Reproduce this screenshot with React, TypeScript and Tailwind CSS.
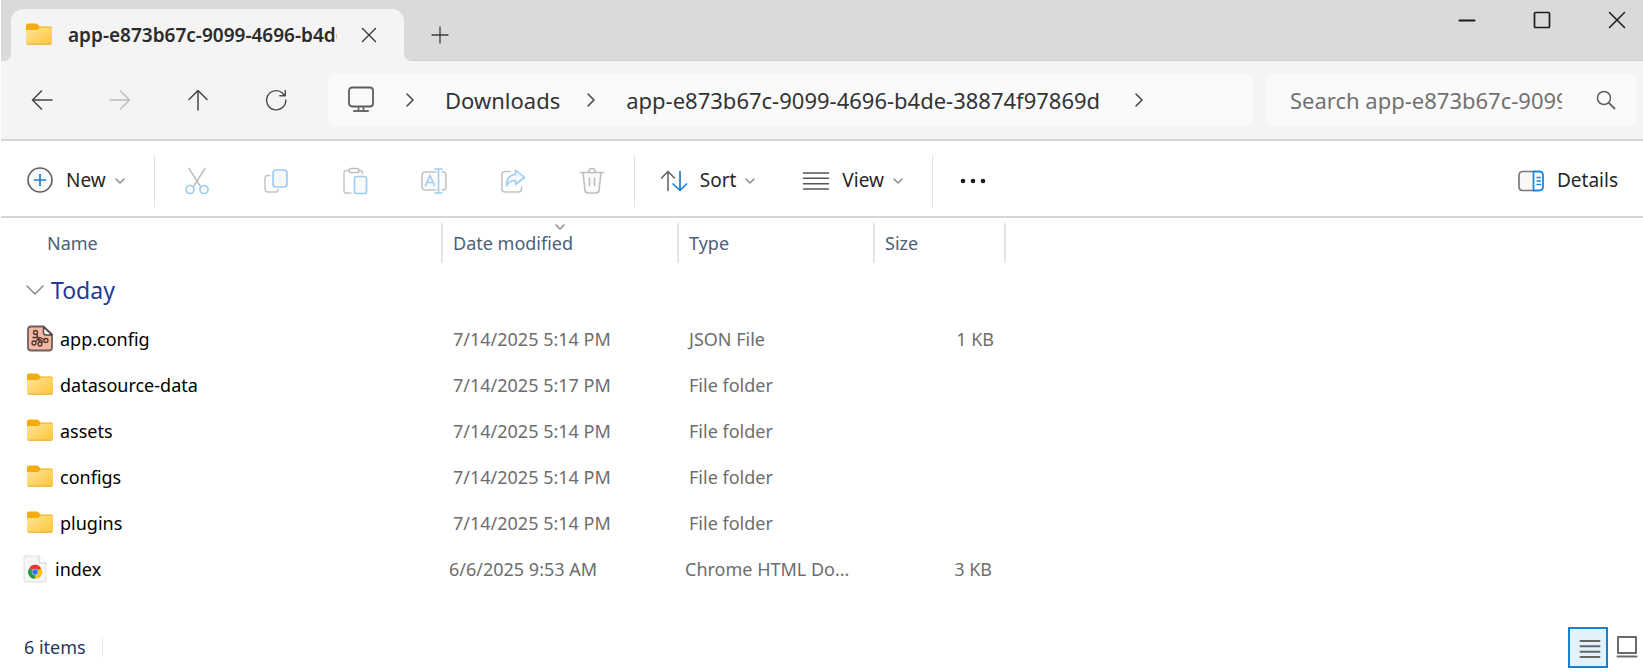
import type { ReactNode } from "react";

type IconProps = { className?: string };

function Svg({ w, h, className = "", children }: IconProps & { w: number; h: number; children: ReactNode }) {
  return (
    <svg
      width={w}
      height={h}
      viewBox={`0 0 ${w} ${h}`}
      fill="none"
      strokeLinecap="round"
      strokeLinejoin="round"
      aria-hidden="true"
      className={`shrink-0 ${className}`}
    >
      {children}
    </svg>
  );
}

function FolderIcon() {
  return (
    <Svg w={28} h={26}>
      <defs>
        <linearGradient id="folder-front" x1="0" y1="0" x2="1" y2="1">
          <stop offset="0" stopColor="#ffe49a" />
          <stop offset="1" stopColor="#fdc63a" />
        </linearGradient>
      </defs>
      <path d="M1 3.500Q1 1.500 3 1.500H10.500Q12 1.500 13 2.800L14.500 4.500H25Q27 4.500 27 6.500V12H1Z" fill="#f3ac0d" />
      <path d="M1 9Q1 8 2 8H11Q12.500 8 13.500 6.800Q14.500 5.500 16 5.500H25.500Q27 5.500 27 7V20.500Q27 22.500 25 22.500H3Q1 22.500 1 20.500Z" fill="url(#folder-front)" />
      <path d="M2 22.200H26" stroke="#e5a82c" strokeWidth="1" />
    </Svg>
  );
}

function JsonIcon() {
  return (
    <Svg w={28} h={28}>
      <path d="M5 1.500H17.500L26 9.500V22.500Q26 25.500 23 25.500H5Q2 25.500 2 22.500V4.500Q2 1.500 5 1.500Z" fill="#f7b7a3" stroke="#6b625f" strokeWidth="1.800" />
      <path d="M17.500 2V7.500Q17.500 10 20 10H26Z" fill="#fff" stroke="#4c4644" strokeWidth="1.400" />
      <g stroke="#4a3530" strokeWidth="1.300">
        <circle cx="9.500" cy="7.500" r="2" />
        <circle cx="8" cy="18" r="2" />
        <circle cx="14" cy="19" r="2" />
        <circle cx="20" cy="15.500" r="2" />
        <path d="M10.800 9.300L13.500 17M9.500 16.500L14 12.500L18 14.500M7 12.500H11.500L17 17" />
      </g>
    </Svg>
  );
}

function ChromeFileIcon() {
  return (
    <Svg w={24} h={28}>
      <path d="M3 1H16L23 8V25Q23 27 21 27H3Q1 27 1 25V3Q1 1 3 1Z" fill="#f6f6f6" stroke="#dedede" />
      <path d="M16 1V6Q16 8 18 8H23" fill="#fff" stroke="#d2d2d2" />
      <path d="M12 17L6.200 13.200A6.800 6.800 0 0 1 18.200 13.500Z" fill="#e33b2e" />
      <path d="M12 17L18.200 13.500A6.800 6.800 0 0 1 12 23.800Z" fill="#fbc116" />
      <path d="M12 17L12 23.800A6.800 6.800 0 0 1 6.200 13.200Z" fill="#259b48" />
      <circle cx="12" cy="17" r="3.200" fill="#cfe0fb" />
      <circle cx="12" cy="17" r="2.700" fill="#2f78ea" />
    </Svg>
  );
}

function ChevronRight() {
  return (
    <Svg w={10} h={16} className="stroke-[#4a4a4a]">
      <path d="M2 2L8 8L2 14" strokeWidth="1.600" />
    </Svg>
  );
}

function ChevronDown({ className = "" }: IconProps) {
  return (
    <Svg w={12} h={8} className={className}>
      <path d="M2 2L6 6L10 2" stroke="#8f8f8f" strokeWidth="1.600" />
    </Svg>
  );
}

function Divider() {
  return <div className="h-[52px] w-px shrink-0 bg-[#e2e2e2]" />;
}

function NavButton({ label, disabled, children }: { label: string; disabled?: boolean; children: ReactNode }) {
  return (
    <button aria-label={label} disabled={disabled} className="flex size-8 items-center justify-center">
      {children}
    </button>
  );
}

function ActionButton({ label, children }: { label: string; children: ReactNode }) {
  return (
    <button aria-label={label} disabled className="flex size-8 items-center justify-center">
      {children}
    </button>
  );
}

function TitleBar() {
  return (
    <header className="flex h-[61px] items-start border-b border-[#cfcfcf] bg-[#dadada] pl-[10px]">
      <div role="tablist" className="relative flex h-[61px] pt-[9px]">
        <Svg w={8} h={8} className="absolute right-full bottom-0">
          <path d="M8 0V8H0Q8 8 8 0Z" fill="#f4f4f4" />
        </Svg>
        <Svg w={8} h={8} className="absolute left-full bottom-0">
          <path d="M0 0V8H8Q0 8 0 0Z" fill="#f4f4f4" />
        </Svg>
        <div
          role="tab"
          aria-selected="true"
          className="flex h-[52px] w-[393px] items-center rounded-t-xl bg-[#f4f4f4] pl-[14px] pr-3"
        >
          <FolderIcon />
          <span className="ml-[15px] w-[269px] overflow-hidden whitespace-nowrap text-[19px] font-semibold leading-7 text-[#2b2b2b]">
            app-e873b67c-9099-4696-b4de-38874f97869d
          </span>
          <button aria-label="Close tab" className="ml-5 flex size-6 items-center justify-center">
            <Svg w={16} h={16}>
              <path d="M1.500 1.500L14.500 14.500M14.500 1.500L1.500 14.500" stroke="#333" strokeWidth="1.300" />
            </Svg>
          </button>
        </div>
      </div>
      <button aria-label="New tab" className="ml-6 mt-[23px] flex size-6 items-center justify-center">
        <Svg w={18} h={18}>
          <path d="M9 1V17M1 9H17" stroke="#3c3c3c" strokeWidth="1.300" />
        </Svg>
      </button>
      <div className="ml-auto flex h-10 items-center gap-[43px] pr-[10px]">
        <button aria-label="Minimize" className="flex size-8 items-center justify-center">
          <Svg w={18} h={18}>
            <path d="M1.500 9.500H16.500" stroke="#1c1c1c" strokeWidth="2" />
          </Svg>
        </button>
        <button aria-label="Maximize" className="flex size-8 items-center justify-center">
          <Svg w={18} h={18}>
            <rect x="1.500" y="1.500" width="15" height="15" rx="1" stroke="#1c1c1c" strokeWidth="1.700" />
          </Svg>
        </button>
        <button aria-label="Close" className="flex size-8 items-center justify-center">
          <Svg w={18} h={18}>
            <path d="M1.500 1.500L16.500 16.500M16.500 1.500L1.500 16.500" stroke="#1c1c1c" strokeWidth="1.500" />
          </Svg>
        </button>
      </div>
    </header>
  );
}

function AddressRow() {
  return (
    <div className="flex h-20 items-center border-b-2 border-[#d6d6d6] bg-[#f4f4f4] pl-[25px] pr-[7px]">
      <nav aria-label="History" className="flex gap-[46px]">
        <NavButton label="Back">
          <Svg w={22} h={22}>
            <path d="M21 11H1.500M10.500 2L1.500 11L10.500 20" stroke="#454545" strokeWidth="1.500" />
          </Svg>
        </NavButton>
        <NavButton label="Forward" disabled>
          <Svg w={22} h={22}>
            <path d="M1 11H20.500M11.500 2L20.500 11L11.500 20" stroke="#bdbdbd" strokeWidth="1.500" />
          </Svg>
        </NavButton>
        <NavButton label="Up">
          <Svg w={22} h={22}>
            <path d="M11 21V1.500M2 10.500L11 1.500L20 10.500" stroke="#454545" strokeWidth="1.500" />
          </Svg>
        </NavButton>
        <NavButton label="Refresh">
          <Svg w={22} h={22}>
            <path d="M20.800 11A9.600 9.600 0 1 1 17.500 4L19.500 6.500M20.300 1.500V6.800H14.800" stroke="#4c4c4c" strokeWidth="1.400" />
          </Svg>
        </NavButton>
      </nav>
      <nav
        aria-label="Address"
        className="ml-[36px] flex h-[52px] min-w-0 flex-1 items-center overflow-hidden rounded-md bg-[#fafafa] pl-[19px] text-[22px] text-[#333]"
      >
        <Svg w={28} h={28}>
          <rect x="2" y="1.500" width="24" height="19" rx="3" stroke="#5c5c5c" strokeWidth="1.800" />
          <path d="M11.500 21V24.500M16.500 21V24.500" stroke="#6a6a6a" strokeWidth="1.800" />
          <path d="M7 25H21" stroke="#6a6a6a" strokeWidth="2.200" />
        </Svg>
        <span className="ml-[30px]">
          <ChevronRight />
        </span>
        <a href="#downloads" className="ml-[30px]">
          Downloads
        </a>
        <span className="ml-[26px]">
          <ChevronRight />
        </span>
        <a href="#app" className="ml-[30px] whitespace-nowrap">
          app-e873b67c-9099-4696-b4de-38874f97869d
        </a>
        <span className="ml-[34px]">
          <ChevronRight />
        </span>
      </nav>
      <label className="ml-[13px] flex h-[52px] w-[370px] shrink-0 items-center rounded-md bg-[#fafafa] pl-6 pr-5">
        <input
          type="text"
          aria-label="Search"
          placeholder="Search app-e873b67c-9099-4696-b4de-38874f97869d"
          className="w-[272px] bg-transparent text-[22px] text-[#333] outline-none placeholder:text-[#717171]"
        />
        <Svg w={20} h={20} className="ml-auto">
          <circle cx="8" cy="8" r="6.500" stroke="#606060" strokeWidth="1.500" />
          <path d="M12.800 12.800L18.500 18.500" stroke="#606060" strokeWidth="1.800" />
        </Svg>
      </label>
    </div>
  );
}

function CommandBar() {
  return (
    <div className="flex h-[77px] items-center border-b-2 border-[#d6d6d6] bg-white px-[25px] pt-1 text-[19px] text-[#262626]">
      <button className="flex items-center">
        <Svg w={28} h={28}>
          <circle cx="14" cy="13" r="12" fill="#fafafa" stroke="#5f5f5f" strokeWidth="1.600" />
          <path d="M14 7.500V18.500M8.500 13H19.500" stroke="#1b7fd0" strokeWidth="1.700" />
        </Svg>
        <span className="ml-3">New</span>
        <ChevronDown className="ml-2" />
      </button>
      <div className="ml-7">
        <Divider />
      </div>
      <div className="ml-[26px] flex gap-[47px]">
        <ActionButton label="Cut">
          <Svg w={24} h={28}>
            <path d="M4 1.500L15.800 20M20 1.500L8.200 20" stroke="#bcbcbc" strokeWidth="1.400" />
            <circle cx="5" cy="22.500" r="4" fill="#fff" stroke="#9fcdf0" strokeWidth="1.700" />
            <circle cx="19" cy="22.500" r="4" fill="#fff" stroke="#9fcdf0" strokeWidth="1.700" />
          </Svg>
        </ActionButton>
        <ActionButton label="Copy">
          <Svg w={26} h={26}>
            <path d="M7 7.500H5Q2 7.500 2 10.500V21Q2 24 5 24H12Q15 24 15.500 21.500" stroke="#c6c6c6" strokeWidth="1.500" />
            <rect x="10" y="2" width="14" height="17" rx="3" fill="#f6f9fc" stroke="#9fcdf0" strokeWidth="1.700" />
          </Svg>
        </ActionButton>
        <ActionButton label="Paste">
          <Svg w={26} h={28}>
            <path d="M7 3.500H4Q2 3.500 2 5.500V24Q2 26 4 26H9M17 3.500H18Q20.500 3.500 20.500 6.500" stroke="#c6c6c6" strokeWidth="1.500" />
            <rect x="7" y="1.500" width="10" height="4" rx="2" stroke="#bcbcbc" strokeWidth="1.400" />
            <rect x="12.500" y="9.500" width="12" height="17" rx="2" fill="#f8fafc" stroke="#9fcdf0" strokeWidth="1.700" />
          </Svg>
        </ActionButton>
        <ActionButton label="Rename">
          <Svg w={28} h={28}>
            <path d="M16 5H5Q2 5 2 8V20Q2 23 5 23H16M22 5H23Q26 5 26 8V20Q26 23 23 23H22" fill="#fafafa" stroke="#c4c4c4" strokeWidth="1.600" />
            <path d="M5.500 18.500L10 8.500L14.500 18.500M7 15.500H13M18.500 2V26M15 2H22M15 26H22" stroke="#9fcdf0" strokeWidth="1.700" />
          </Svg>
        </ActionButton>
        <ActionButton label="Share">
          <Svg w={26} h={26}>
            <path d="M10 3.500H5Q2 3.500 2 6.500V21Q2 24 5 24H18.500Q21.500 24 21.500 21V19" stroke="#c4c4c4" strokeWidth="1.600" />
            <path d="M15.500 2L24.500 9.500L15.500 16.500V12.500Q9 12.500 6.500 18Q6.500 7 15.500 6.500Z" fill="#f2f8fd" stroke="#9fcdf0" strokeWidth="1.600" />
          </Svg>
        </ActionButton>
        <ActionButton label="Delete">
          <Svg w={26} h={28}>
            <path d="M4 5.500L6 23.500Q6.300 26 9 26H17Q19.700 26 20 23.500L22 5.500Z" fill="#fafafa" />
            <path d="M1.500 5.500H24.500M4 5.500L6 23.500Q6.300 26 9 26H17Q19.700 26 20 23.500L22 5.500M9.500 5Q10 1.500 13 1.500Q16 1.500 16.500 5M10.500 11V18.500M15.500 11V18.500" stroke="#bebebe" strokeWidth="1.600" />
          </Svg>
        </ActionButton>
      </div>
      <div className="ml-[26px]">
        <Divider />
      </div>
      <button className="ml-[25px] flex items-center">
        <Svg w={28} h={22}>
          <path d="M8 20.500V1.500M1.500 8L8 1.500L14.500 8" stroke="#606060" strokeWidth="1.500" />
          <path d="M20 1.500V20.500M13 14L20 20.500L26.500 14" stroke="#1b7fd0" strokeWidth="1.700" />
        </Svg>
        <span className="ml-3">Sort</span>
        <ChevronDown className="ml-2" />
      </button>
      <button className="ml-[46px] flex items-center">
        <Svg w={28} h={20}>
          <path d="M1.500 2H26.500M1.500 7.300H26.500M1.500 12.700H26.500M1.500 18H26.500" stroke="#555" strokeWidth="1.500" />
        </Svg>
        <span className="ml-3">View</span>
        <ChevronDown className="ml-2" />
      </button>
      <div className="ml-7">
        <Divider />
      </div>
      <button aria-label="More" className="ml-[26px] flex h-8 items-center">
        <Svg w={28} h={8}>
          <circle cx="4" cy="4" r="2.300" fill="#1c1c1c" />
          <circle cx="14" cy="4" r="2.300" fill="#1c1c1c" />
          <circle cx="24" cy="4" r="2.300" fill="#1c1c1c" />
        </Svg>
      </button>
      <button className="ml-auto flex items-center">
        <Svg w={28} h={22}>
          <path d="M16.500 1.500H6Q2 1.500 2 5.500V16.500Q2 20.500 6 20.500H16.500" fill="#f8f8f8" stroke="#7a7a7a" strokeWidth="1.700" />
          <path d="M16.500 1.500H22Q26 1.500 26 5.500V16.500Q26 20.500 22 20.500H16.500Z" fill="#fff" stroke="#1e88dd" strokeWidth="1.800" />
          <path d="M20 7.500H23.500M20 11H23.500M20 14.500H23.500" stroke="#1e88dd" strokeWidth="1.500" />
        </Svg>
        <span className="ml-3">Details</span>
      </button>
    </div>
  );
}

type FileKind = "json" | "folder" | "chrome";

const files: { name: string; date: string; type: string; size: string; kind: FileKind }[] = [
  { name: "app.config", date: "7/14/2025 5:14 PM", type: "JSON File", size: "1 KB", kind: "json" },
  { name: "datasource-data", date: "7/14/2025 5:17 PM", type: "File folder", size: "", kind: "folder" },
  { name: "assets", date: "7/14/2025 5:14 PM", type: "File folder", size: "", kind: "folder" },
  { name: "configs", date: "7/14/2025 5:14 PM", type: "File folder", size: "", kind: "folder" },
  { name: "plugins", date: "7/14/2025 5:14 PM", type: "File folder", size: "", kind: "folder" },
  { name: "index", date: "6/6/2025 9:53 AM", type: "Chrome HTML Do...", size: "3 KB", kind: "chrome" },
];

function HeaderCell({ label, sorted, first }: { label: string; sorted?: boolean; first?: boolean }) {
  return (
    <th scope="col" className="p-0 font-normal">
      <div className="relative mt-1 flex h-10 items-center border-r-2 border-[#e5e5e5]">
        {sorted && (
          <span className="absolute inset-x-0 top-0 flex justify-center">
            <ChevronDown />
          </span>
        )}
        <button className={first ? "pl-[46px]" : "pl-[10px]"}>{label}</button>
      </div>
    </th>
  );
}

function FileTable() {
  return (
    <table className="w-[1005px] table-fixed border-collapse text-left text-[18px] leading-6">
      <colgroup>
        <col className="w-[442px]" />
        <col className="w-[236px]" />
        <col className="w-[196px]" />
        <col className="w-[131px]" />
      </colgroup>
      <thead className="text-[#4c607a]">
        <tr className="h-[46px]">
          <HeaderCell label="Name" first />
          <HeaderCell label="Date modified" sorted />
          <HeaderCell label="Type" />
          <HeaderCell label="Size" />
        </tr>
      </thead>
      <tbody>
        <tr className="h-[52px]">
          <th colSpan={4} scope="rowgroup" className="p-0 font-normal">
            <button aria-expanded="true" className="flex items-center gap-[6px] pl-6 text-[23px] text-[#1f3a93]">
              <Svg w={20} h={14}>
                <path d="M2 3L10 11L18 3" stroke="#8c8c8c" strokeWidth="1.600" />
              </Svg>
              Today
            </button>
          </th>
        </tr>
        {files.map((file) => {
          const chrome = file.kind === "chrome";
          return (
            <tr key={file.name} className="h-[46px] text-[#6d6d6d]">
              <td className="p-0">
                <div className={chrome ? "flex items-center gap-2 pl-[22px]" : "flex items-center gap-[6px] pl-[25px]"}>
                  {file.kind === "json" && <JsonIcon />}
                  {file.kind === "folder" && <FolderIcon />}
                  {chrome && <ChromeFileIcon />}
                  <span className="text-black">{file.name}</span>
                </div>
              </td>
              <td className={chrome ? "p-0 pl-1.5" : "p-0 pl-[10px]"}>{file.date}</td>
              <td className={chrome ? "whitespace-nowrap p-0 pl-1.5" : "p-0 pl-[10px]"}>{file.type}</td>
              <td className={chrome ? "p-0 pr-[14px] text-right" : "p-0 pr-3 text-right"}>{file.size}</td>
            </tr>
          );
        })}
      </tbody>
    </table>
  );
}

function StatusBar() {
  return (
    <footer className="mt-auto flex h-12 items-center pl-[23px] text-[18px] text-[#1e395b]">
      <span>6 items</span>
      <div className="ml-4 h-5 w-px bg-[#e8e8e8]" />
      <div className="ml-auto flex items-center gap-2 pr-[5px]">
        <button
          aria-label="Details view"
          aria-pressed="true"
          className="flex h-[41px] w-10 items-center justify-center border-2 border-[#1b7fd0] bg-[#e3f1fb]"
        >
          <Svg w={22} h={20} className="ml-1 mt-1">
            <path d="M1.500 2H20.500M1.500 7.300H20.500M1.500 12.700H20.500M1.500 18H20.500" stroke="#666" strokeWidth="1.900" />
          </Svg>
        </button>
        <button aria-label="Large icons view" className="flex h-[41px] items-center">
          <Svg w={22} h={24}>
            <rect x="2" y="2" width="18" height="16" stroke="#6a6a6a" strokeWidth="2" />
            <path d="M1.500 21.500H20.500" stroke="#6a6a6a" strokeWidth="2" />
          </Svg>
        </button>
      </div>
    </footer>
  );
}

export default function App() {
  return (
    <div className="flex min-h-screen flex-col border-l border-white bg-white font-['Noto_Sans','Open_Sans',sans-serif]">
      <TitleBar />
      <AddressRow />
      <CommandBar />
      <main>
        <FileTable />
      </main>
      <StatusBar />
    </div>
  );
}
